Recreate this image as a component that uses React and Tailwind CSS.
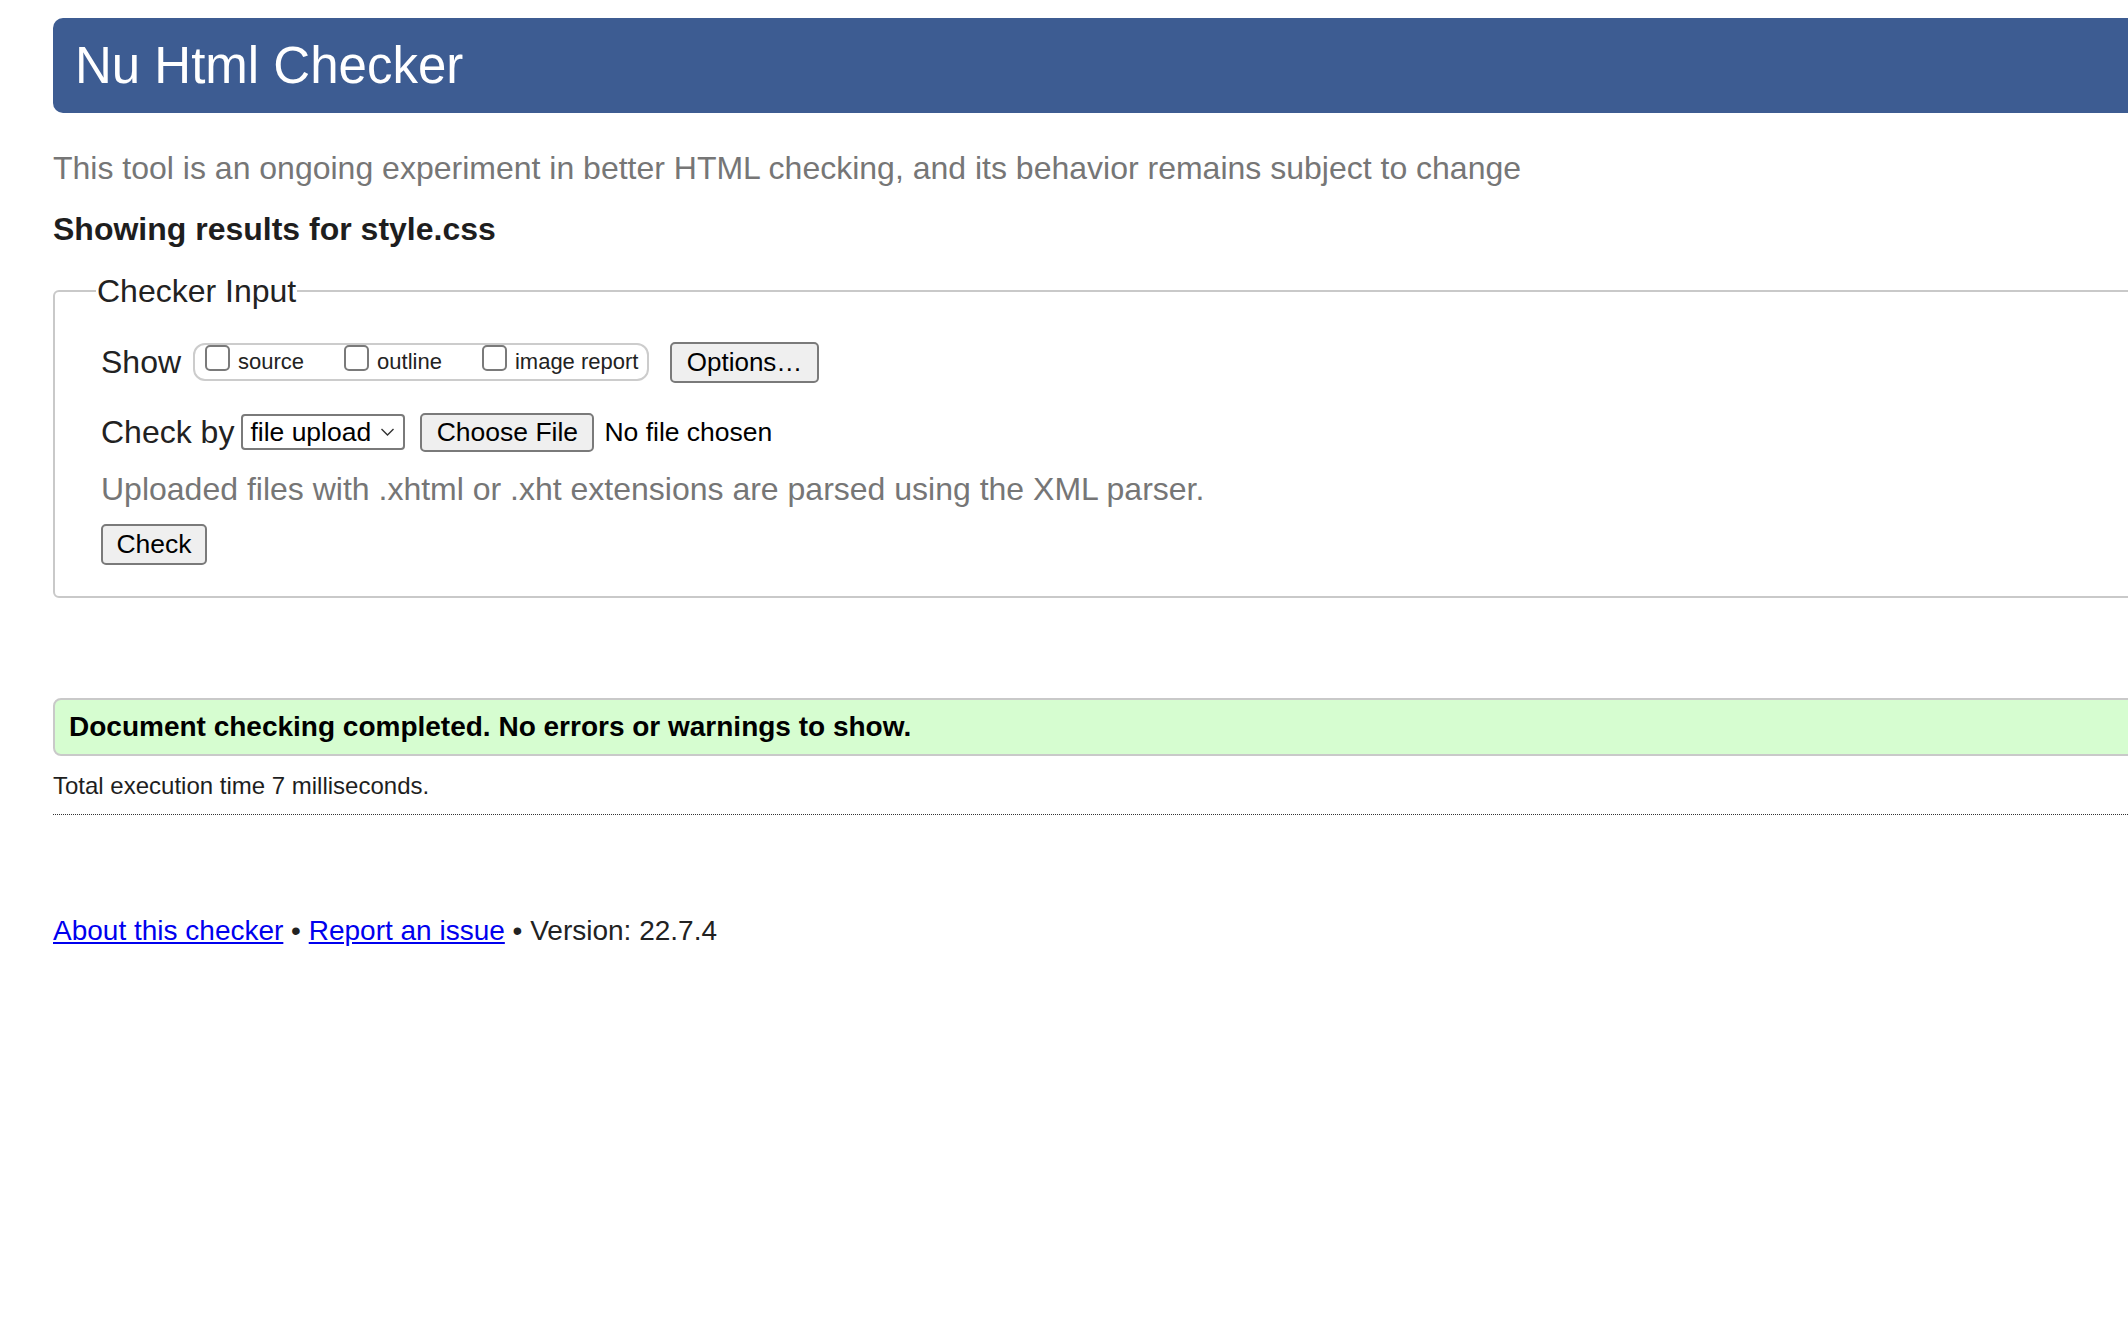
import React from 'react';

const Box = () => (
  <span className="inline-block w-[25px] h-[26px] mb-[2px] rounded-[5px] border-2 border-[#7a7a7a] bg-white shrink-0" />
);

const Toggle = ({ label }) => (
  <label className="flex items-end gap-[8px]">
    <Box />
    <span className="text-[22px] leading-[22px]">{label}</span>
  </label>
);

const App = () => {
  return (
    <div className="w-full min-h-screen overflow-hidden bg-white text-[#222] font-['Liberation_Sans',Arial,sans-serif]">
      <div className="ml-[53px] mr-[-60px]">
        {/* Title bar */}
        <header className="mt-[18px] h-[95px] rounded-[10px] bg-[#3d5c92] flex items-center pl-[22px]">
          <h1 className="text-[51px] leading-none text-white">Nu Html Checker</h1>
        </header>

        <p className="mt-[35px] text-[32px] leading-[40px] text-[#767676]">
          This tool is an ongoing experiment in better HTML checking, and its behavior remains subject to change
        </p>

        <p className="mt-[21px] text-[32px] leading-[40px] font-bold text-[#1e1e1e]">
          Showing results for style.css
        </p>

        {/* Checker input */}
        <fieldset className="mt-[22px] border-2 border-[#c9c9c9] rounded-[6px] pl-[41px] pb-[31px]">
          <legend className="px-[1px] text-[32px] leading-[40px]">Checker Input</legend>

          <div className="pl-[5px]">
            <div className="mt-[30px] h-[42px] flex items-center">
              <span className="text-[32px] leading-none">Show</span>
              <div className="ml-[12px] h-[38px] w-[456px] flex items-end gap-[40px] pl-[10px] pb-[6px] border-2 border-[#cccccc] rounded-[12px]">
                <Toggle label="source" />
                <Toggle label="outline" />
                <Toggle label="image report" />
              </div>
              <button className="ml-[21px] h-[41px] w-[149px] bg-[#efefef] border-2 border-[#7a7a7a] rounded-[5px] text-[26px] leading-none text-black">
                Options…
              </button>
            </div>

            <div className="mt-[28px] h-[42px] flex items-center">
              <span className="text-[32px] leading-none">Check by</span>
              <div className="ml-[7px] h-[36px] w-[164px] flex items-center justify-between pl-[7px] pr-[8px] border-2 border-[#7a7a7a] rounded-[4px] bg-white">
                <span className="text-[26.5px] leading-none text-black">file upload</span>
                <svg width="15" height="10" viewBox="0 0 15 10" fill="none">
                  <path d="M1.5 2 L7.5 8 L13.5 2" stroke="#333" strokeWidth="1.4" />
                </svg>
              </div>
              <button className="ml-[15px] h-[39px] w-[174px] bg-[#efefef] border-2 border-[#7a7a7a] rounded-[5px] text-[26.5px] leading-none text-black">
                Choose File
              </button>
              <span className="ml-[10px] text-[26.5px] leading-none text-black">No file chosen</span>
            </div>

            <p className="mt-[16px] text-[32px] leading-[40px] text-[#767676]">
              Uploaded files with .xhtml or .xht extensions are parsed using the XML parser.
            </p>

            <button className="mt-[15px] h-[41px] w-[106px] bg-[#efefef] border-2 border-[#7a7a7a] rounded-[5px] text-[26.5px] leading-none text-black">
              Check
            </button>
          </div>
        </fieldset>

        {/* Result */}
        <div className="mt-[100px] h-[58px] flex items-center pl-[14px] bg-[#d6fdd0] border-2 border-[#c9c9c9] rounded-[8px]">
          <p className="text-[28px] leading-none font-bold text-black">
            Document checking completed. No errors or warnings to show.
          </p>
        </div>

        <p className="mt-[15px] pb-[13px] text-[24px] leading-[30px] text-[#1e1e1e] border-b border-dotted border-[#333]">
          Total execution time 7 milliseconds.
        </p>

        <p className="mt-[98px] text-[28px] leading-[36px] text-[#222]">
          <a href="#" className="text-[#0000ee] underline">About this checker</a>
          {' • '}
          <a href="#" className="text-[#0000ee] underline">Report an issue</a>
          {' • Version: 22.7.4'}
        </p>
      </div>
    </div>
  );
};

export default App;
